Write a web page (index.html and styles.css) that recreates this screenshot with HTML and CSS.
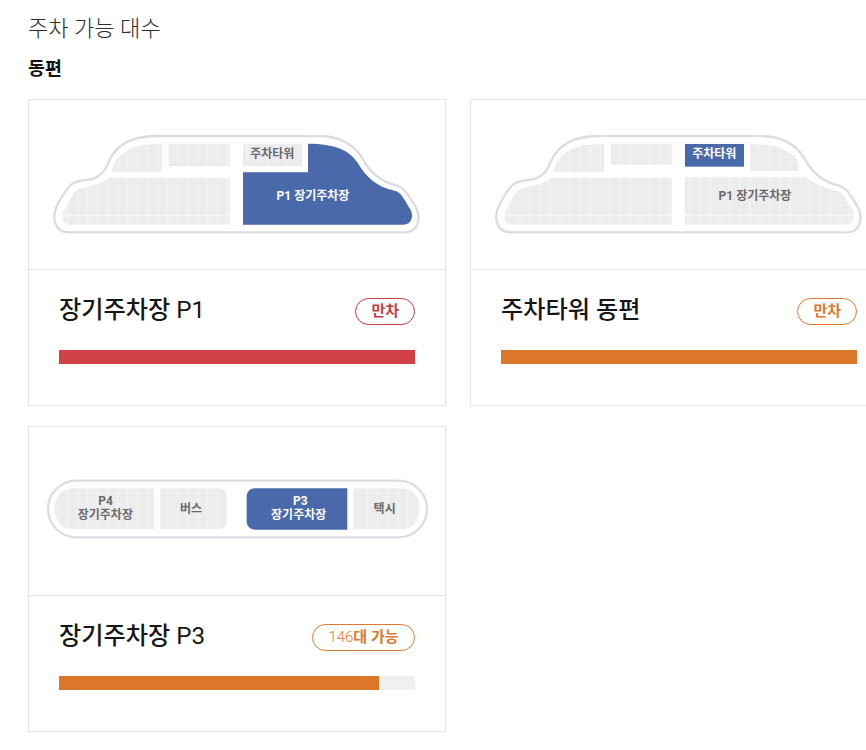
FILE: index.html
```html
<!DOCTYPE html>
<html lang="ko">
<head>
  <meta charset="UTF-8" />
  <meta name="viewport" content="width=device-width, initial-scale=1.0"/>
  <title>주차 가능 대수</title>
  <link rel="stylesheet" href="styles.css">
</head>
<body>
  <!-- shared seat texture and east lot shapes -->
  <svg class="map-defs" aria-hidden="true">
    <defs>
      <pattern id="rows" width="60" height="6" patternUnits="userSpaceOnUse">
        <rect width="60" height="3" fill="#efeff0"/>
      </pattern>
      <pattern id="seats" width="60" height="288" patternUnits="userSpaceOnUse">
        <rect width="60" height="288" fill="#f2f2f3"/>
        <path d="M3 0h24v288H3ZM33 0h21v288H33Z" fill="#e9e9eb"/>
        <rect width="60" height="288" fill="url(#rows)"/>
        <rect y="55" width="60" height="6" fill="#f5f5f6"/>
      </pattern>
      <path id="east-outline" d="M125 258C138 244 155 241 175 240C205 238 226 224 240 190C258 145 300 108 385 108H870C935 108 980 135 1005 178C1025 215 1060 248 1105 256C1130 262 1140 285 1160 315C1180 350 1175 397 1130 397H125C75 397 70 350 90 310C102 290 112 272 125 258Z"/>
      <path id="east-upper-left" d="M250 215C262 165 305 132 385 132H402V215H250Z"/>
      <path id="east-lower-left" d="M245 233H606V374H125C105 374 98 352 108 332C122 305 135 275 155 265C190 258 225 250 245 233Z"/>
    </defs>
  </svg>

  <h2 class="page-title">주차 가능 대수</h2>
  <h3 class="zone-title">동편</h3>

  <div class="card-grid">
    <div class="card">
      <div class="card-map">
        <svg viewBox="3 0 1248 507" width="416" height="169">
          <use href="#east-outline" class="outline"/>
          <use href="#east-upper-left" class="seat"/>
          <rect x="423" y="132" width="183" height="66" class="seat"/>
          <rect x="645" y="132" width="177" height="66" class="seat"/>
          <use href="#east-lower-left" class="seat"/>
          <path class="active" d="M840 131C920 131 965 150 990 190C1012 228 1045 262 1100 272C1120 276 1130 300 1148 330C1158 350 1150 374 1125 374H645V217H840Z"/>
          <text x="733" y="175" class="label">주차타워</text>
          <text x="855" y="301" class="label on">P1 장기주차장</text>
        </svg>
      </div>
      <div class="card-body">
        <div class="card-head">
          <h4 class="lot-name">장기주차장 <span>P1</span></h4>
          <span class="badge red"><b>만차</b></span>
        </div>
        <div class="bar"><div class="bar-fill red" style="width: 100%"></div></div>
      </div>
    </div>

    <div class="card">
      <div class="card-map">
        <svg viewBox="3 0 1248 507" width="416" height="169">
          <use href="#east-outline" class="outline"/>
          <use href="#east-upper-left" class="seat"/>
          <rect x="423" y="132" width="183" height="62" class="seat"/>
          <path class="seat" d="M840 132C915 132 965 150 985 185V213H840Z"/>
          <use href="#east-lower-left" class="seat"/>
          <path class="seat" d="M645 232H1010C1035 255 1065 265 1100 272C1120 276 1130 300 1148 330C1158 350 1150 374 1125 374H645Z"/>
          <rect x="645" y="132" width="177" height="68" class="active"/>
          <text x="733" y="175" class="label on">주차타워</text>
          <text x="855" y="301" class="label">P1 장기주차장</text>
        </svg>
      </div>
      <div class="card-body">
        <div class="card-head">
          <h4 class="lot-name">주차타워 동편</h4>
          <span class="badge orange"><b>만차</b></span>
        </div>
        <div class="bar"><div class="bar-fill orange" style="width: 100%"></div></div>
      </div>
    </div>

    <div class="card">
      <div class="card-map short">
        <svg viewBox="3 -99 1248 507" width="416" height="169">
          <rect x="60" y="62" width="1137" height="170" rx="85" class="outline"/>
          <path class="seat" d="M378 85V208H135C100 208 80 180 80 147C80 112 100 85 135 85Z"/>
          <path class="seat" d="M397 85H570C586 85 596 95 596 110V183C596 198 586 208 570 208H397Z"/>
          <path class="active" d="M958 85V209H682C666 209 656 199 656 184V110C656 95 666 85 682 85Z"/>
          <path class="seat" d="M976 85H1120C1155 85 1175 112 1175 147C1175 180 1155 208 1120 208H976Z"/>
          <text x="233" y="134" class="label">P4</text>
          <text x="232" y="177" class="label">장기주차장</text>
          <text x="489" y="158" class="label">버스</text>
          <text x="817" y="134" class="label on">P3</text>
          <text x="812" y="177" class="label on">장기주차장</text>
          <text x="1070" y="158" class="label">택시</text>
        </svg>
      </div>
      <div class="card-body">
        <div class="card-head">
          <h4 class="lot-name">장기주차장 <span>P3</span></h4>
          <span class="badge orange wide">146<b>대 가능</b></span>
        </div>
        <div class="bar"><div class="bar-fill orange" style="width: 90%"></div></div>
      </div>
    </div>
  </div>
</body>
</html>
```

FILE: styles.css
```css
html {
  overflow: hidden;
}

body {
  margin: 0;
  padding: 0 0 18px 28px;
  background: white;
  color: #222;
  font-family: Roboto, "Noto Sans CJK KR", sans-serif;
}

.map-defs {
  display: block;
  width: 0;
  height: 0;
}

.page-title {
  margin: 0;
  padding-top: 12px;
  font-size: 22.1px;
  font-weight: 300;
  line-height: 32px;
  color: #2c2c2c;
}

.zone-title {
  margin: 12px 0 0;
  font-size: 18.4px;
  font-weight: 700;
  line-height: 26px;
  color: #111;
}

.card-grid {
  display: grid;
  grid-template-columns: 418px 418px;
  gap: 20px 24px;
  margin-top: 17px;
  width: 860px;
}

.card {
  border: 1px solid #e3e5e9;
}

.card-map {
  height: 169px;
  border-bottom: 1px solid #e3e5e9;
}

.card-map.short {
  height: 168px;
}

.card-map svg {
  display: block;
}

.outline {
  fill: white;
  stroke: #dcdde3;
  stroke-width: 7;
}

.seat {
  fill: url(#seats);
}

.active {
  fill: #4a69aa;
}

.label {
  fill: #6a6a6a;
  font-size: 36px;
  font-weight: 700;
  text-anchor: middle;
}

.label.on {
  fill: white;
}

.card-body {
  box-sizing: border-box;
  height: 135px;
  padding: 22px 30px 0;
}

.card-head {
  display: flex;
  justify-content: space-between;
  align-items: flex-start;
  height: 58px;
}

.lot-name {
  margin: 0;
  font-size: 24.2px;
  font-weight: 500;
  line-height: 36px;
  color: #161616;
}

.lot-name span {
  font-weight: 400;
}

.badge {
  box-sizing: border-box;
  height: 27px;
  margin-top: 6px;
  padding: 0 15px;
  border: 1px solid;
  border-radius: 14px;
  font-size: 15px;
  font-weight: 300;
  line-height: 24px;
}

.badge.wide {
  padding: 0 15.5px;
}

.badge b {
  font-weight: 700;
}

.badge.red {
  color: #c23f44;
}

.badge.orange {
  color: #d97a30;
}

.bar {
  height: 14px;
  background: #f0f0f0;
}

.bar-fill {
  height: 14px;
}

.bar-fill.red {
  background: #d14146;
}

.bar-fill.orange {
  background: #dc772a;
}
```
